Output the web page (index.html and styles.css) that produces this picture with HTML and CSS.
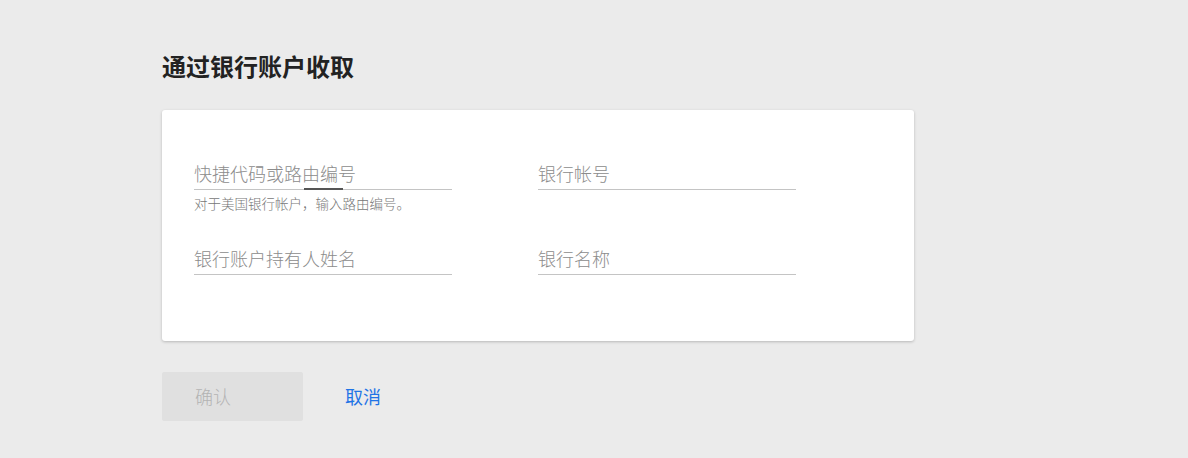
FILE: index.html
```html
<!DOCTYPE html>
<html lang="zh-CN">
<head>
    <meta charset="UTF-8" />
    <meta name="viewport" content="width=device-width, initial-scale=1" />
    <title>通过银行账户收取</title>
    <link rel="stylesheet" href="styles.css">
</head>
<body>
<div class="pagina">
    <h1 class="titulo">通过银行账户收取</h1>

    <div class="cartao">
        <div class="campos">
            <div class="campo">
                <div class="campo-linha ativo">
                    <input type="text" placeholder="快捷代码或路由编号" />
                    <span class="foco"></span>
                </div>
                <div class="ajuda">对于美国银行帐户，输入路由编号。</div>
            </div>
            <div class="campo">
                <div class="campo-linha">
                    <input type="text" placeholder="银行帐号" />
                </div>
            </div>
            <div class="campo">
                <div class="campo-linha">
                    <input type="text" placeholder="银行账户持有人姓名" />
                </div>
            </div>
            <div class="campo">
                <div class="campo-linha">
                    <input type="text" placeholder="银行名称" />
                </div>
            </div>
        </div>
    </div>

    <div class="acoes">
        <button class="btn-confirmar" disabled>确认</button>
        <button class="btn-cancelar">取消</button>
    </div>
</div>
</body>
</html>
```

FILE: styles.css
```css
:root {
    --cor-fundo: #ebebeb;
    --cor-cartao: #fff;
    --cor-titulo: #222;
    --cor-placeholder: #8c8c8c;
    --cor-ajuda: #777;
    --cor-linha: #c4c4c4;
    --cor-foco: #555;
    --cor-link: #1f74e6;
    --fonte: "Noto Sans CJK SC", "Noto Sans", sans-serif;
}

html, body {
    margin: 0;
    height: 100%;
    background: var(--cor-fundo);
    font-family: var(--fonte);
}

.pagina {
    padding: 50px 0 0 162px;
    box-sizing: border-box;
}

.titulo {
    margin: 0 0 28px;
    font-size: 24px;
    line-height: 32px;
    font-weight: 700;
    color: var(--cor-titulo);
}

.cartao {
    width: 752px;
    box-sizing: border-box;
    background: var(--cor-cartao);
    border-radius: 3px;
    box-shadow: 0 1px 3px rgba(0, 0, 0, 0.22);
    padding: 52px 32px 66px;
}

.campos {
    display: grid;
    grid-template-columns: 258px 258px;
    column-gap: 86px;
    row-gap: 35px;
    align-items: start;
}

.campo-linha {
    position: relative;
    border-bottom: 1px solid var(--cor-linha);
    padding-bottom: 5px;
}

.campo-linha input {
    display: block;
    width: 100%;
    box-sizing: border-box;
    border: none;
    outline: none;
    padding: 0;
    margin: 0;
    background: transparent;
    font-family: var(--fonte);
    font-size: 18px;
    font-weight: 300;
    line-height: 22px;
    height: 22px;
    color: var(--cor-titulo);
}

.campo-linha input::placeholder {
    color: var(--cor-placeholder);
    opacity: 1;
}

.foco {
    position: absolute;
    left: 110px;
    bottom: -1px;
    width: 39px;
    height: 2px;
    background: var(--cor-foco);
}

.ajuda {
    margin-top: 4px;
    font-size: 13.5px;
    line-height: 18px;
    font-weight: 300;
    color: var(--cor-ajuda);
}

.acoes {
    display: flex;
    align-items: center;
    margin-top: 31px;
}

.btn-confirmar {
    width: 141px;
    height: 49px;
    text-align: left;
    padding: 0 0 2px 33px;
    border: none;
    border-radius: 2px;
    background: #e0e0e0;
    color: #b3b3b3;
    font-family: var(--fonte);
    font-size: 18px;
    font-weight: 300;
}

.btn-cancelar {
    margin-left: 42px;
    padding: 0 0 2px;
    border: none;
    background: transparent;
    color: var(--cor-link);
    font-family: var(--fonte);
    font-size: 18px;
    cursor: pointer;
}
```
